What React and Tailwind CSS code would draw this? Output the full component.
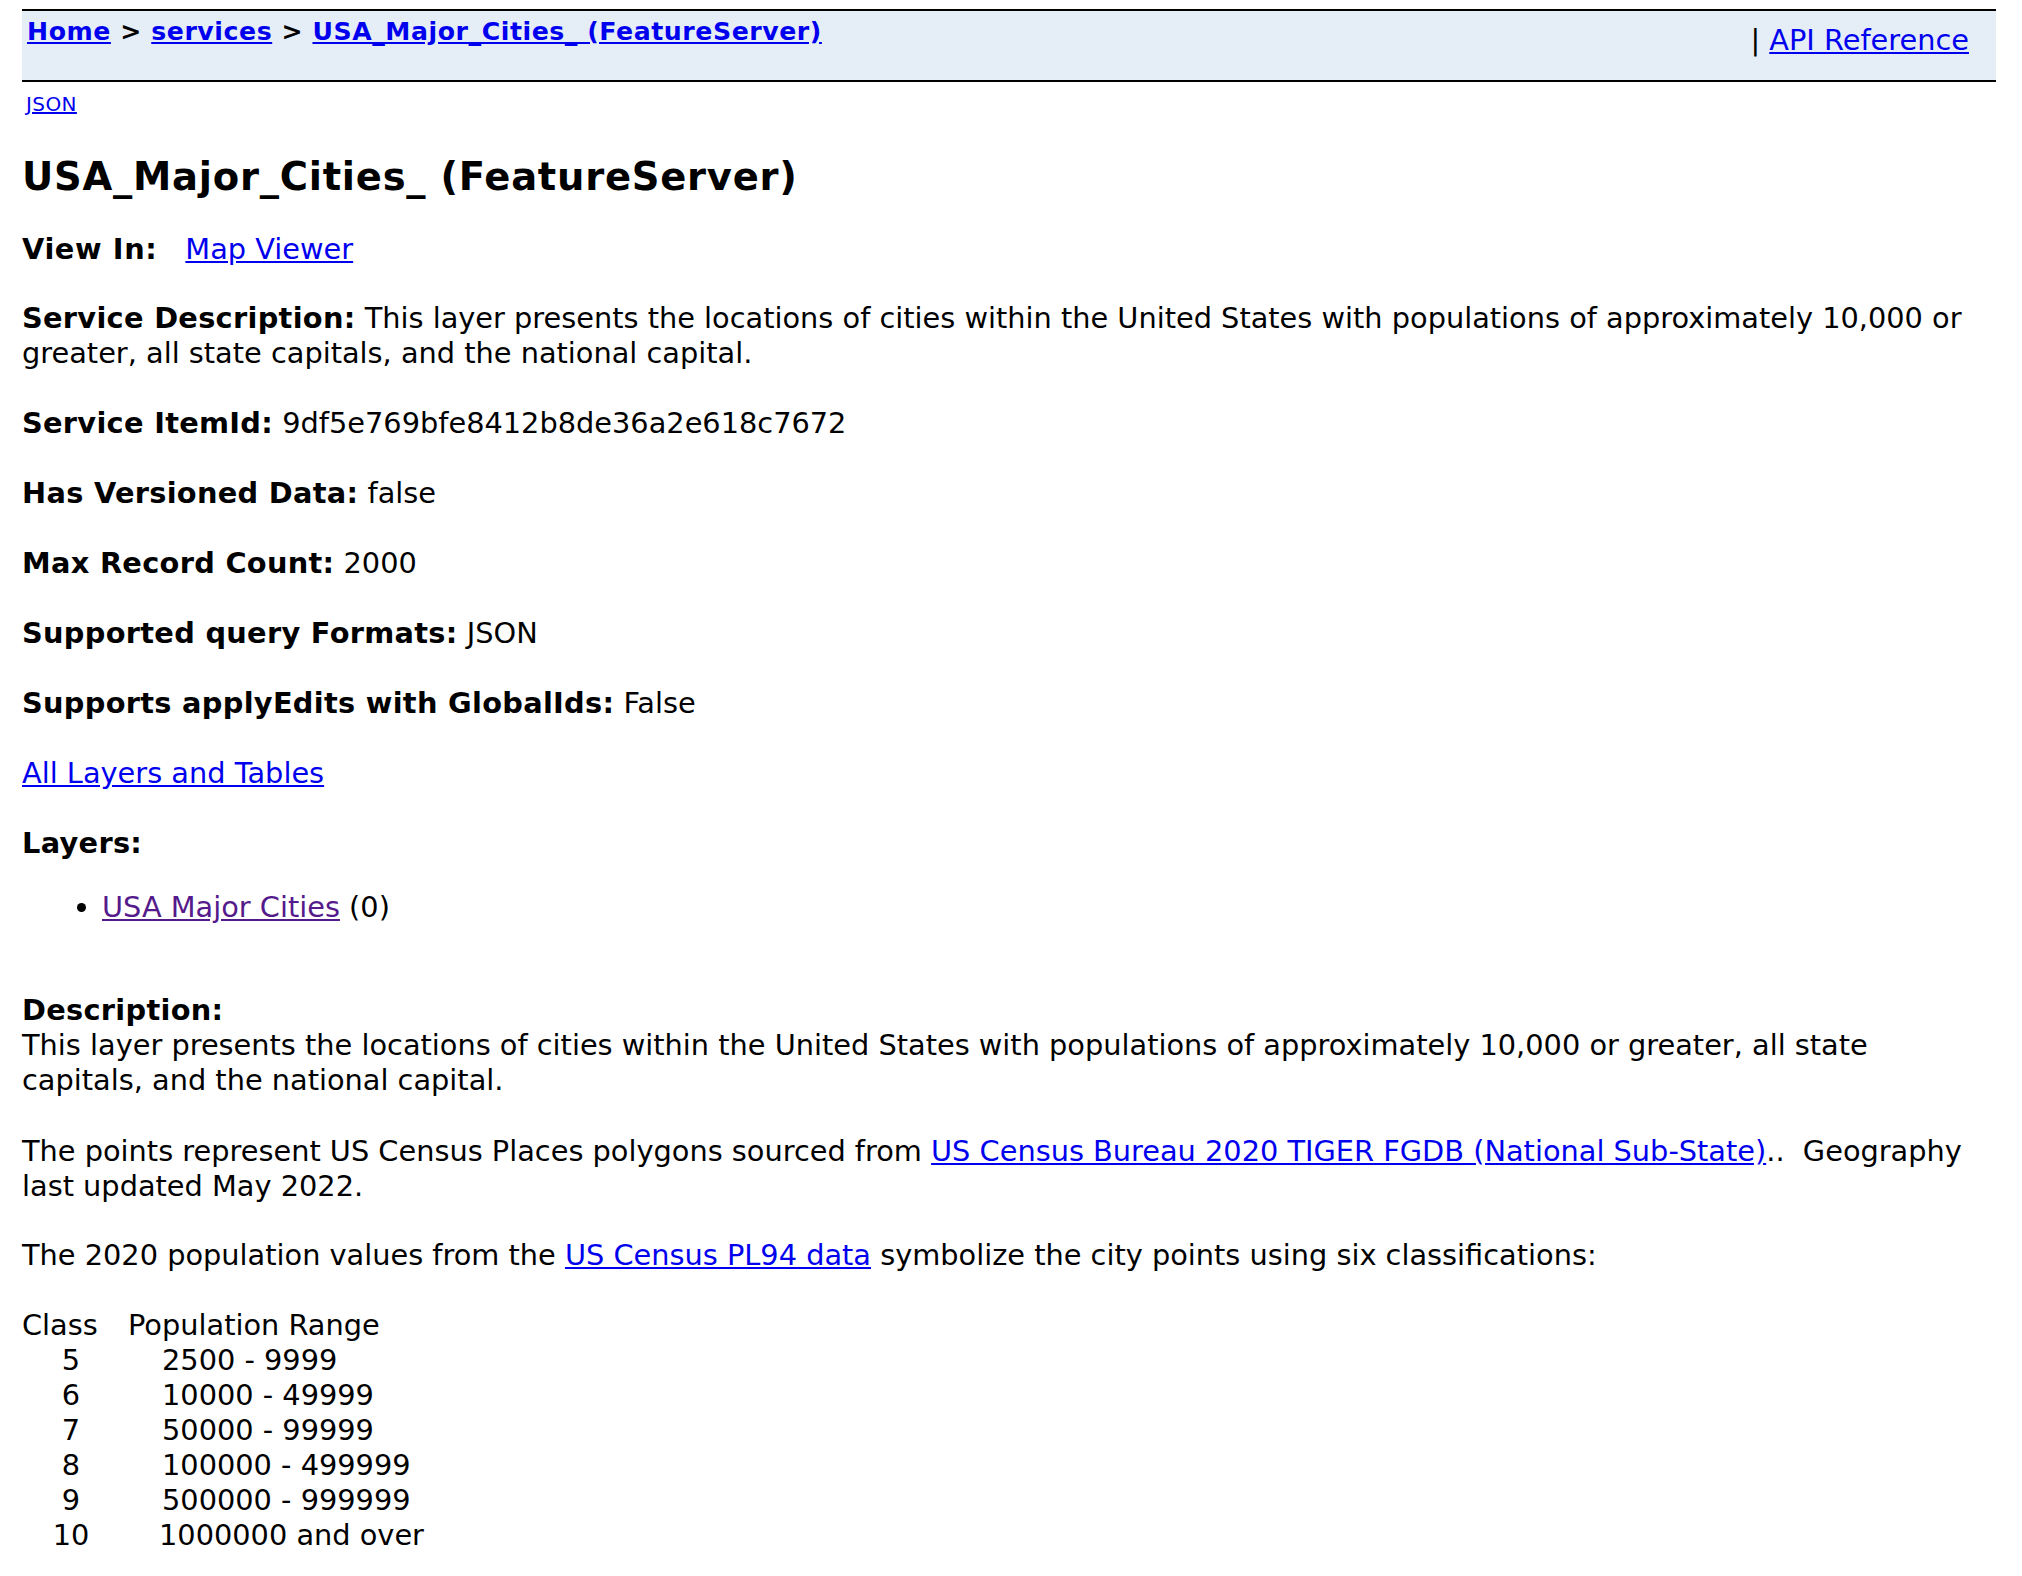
import React from 'react';

const ranges = [
  { cls: '5', range: '2500 - 9999' },
  { cls: '6', range: '10000 - 49999' },
  { cls: '7', range: '50000 - 99999' },
  { cls: '8', range: '100000 - 499999' },
  { cls: '9', range: '500000 - 999999' },
  { cls: '10', range: '1000000 and over' },
];

const Field = ({ label, children }) => (
  <div className="mb-[35px]">
    <b className="tracking-[0.3px]">{label}</b> {children}
  </div>
);

const A = ({ children, visited }) => (
  <a href="#" className={visited ? 'text-[#551a8b] underline' : 'text-[#0000ee] underline'}>
    {children}
  </a>
);

export default function App() {
  return (
    <div
      className="bg-white text-black pl-[22px] pr-[26px] pb-[20px] text-[28.8px] leading-[35px]"
      style={{ fontFamily: '"DejaVu Sans", Verdana, sans-serif' }}
    >
      {/* header bar */}
      <div className="mt-[9px] h-[73px] border-y-2 border-black bg-[#e5eef6] flex justify-between">
        <div className="pl-[5px] pt-[6px] text-[25.2px] leading-[30px] font-bold tracking-[0.55px]">
          <A>Home</A> &gt; <A>services</A> &gt; <A>USA_Major_Cities_ (FeatureServer)</A>
        </div>
        <div className="pt-[12px] pr-[27px]">
          | <A>API Reference</A>
        </div>
      </div>

      <div className="mt-[11px] pl-[4px] text-[20px] leading-[23px] tracking-[0.4px]">
        <A>JSON</A>
      </div>

      <h2 className="mt-[37px] text-[38.5px] leading-[47px] font-bold tracking-[0.75px]">
        USA_Major_Cities_ (FeatureServer)
      </h2>

      <div className="mt-[32px] mb-[34px]">
        <b className="tracking-[0.6px]">View In:</b>
        <span className="inline-block w-[28px]" />
        <A>Map Viewer</A>
      </div>

      <Field label="Service Description:">
        This layer presents the locations of cities within the United States with populations of approximately 10,000 or greater, all state capitals, and the national capital.
      </Field>
      <Field label="Service ItemId:">9df5e769bfe8412b8de36a2e618c7672</Field>
      <Field label="Has Versioned Data:">false</Field>
      <Field label="Max Record Count:">2000</Field>
      <Field label="Supported query Formats:">JSON</Field>
      <Field label="Supports applyEdits with GlobalIds:">False</Field>

      <div className="mb-[35px]">
        <A>All Layers and Tables</A>
      </div>

      <div className="font-bold tracking-[0.3px]">Layers:</div>
      <ul className="mt-[29px] pl-[80px] list-disc">
        <li>
          <A visited>USA Major Cities</A> (0)
        </li>
      </ul>

      <div className="mt-[68px] font-bold tracking-[0.3px]">Description:</div>
      <div>
        This layer presents the locations of cities within the United States with populations of approximately 10,000 or greater, all state capitals, and the national capital.
      </div>
      <div className="mt-[36px]">
        The points represent US Census Places polygons sourced from <A>US Census Bureau 2020 TIGER FGDB (National Sub-State)</A>..&nbsp; Geography last updated May 2022.
      </div>
      <div className="mt-[34px]">
        The 2020 population values from the <A>US Census PL94 data</A> symbolize the city points using six classifications:
      </div>

      <div className="mt-[35px]">
        <div className="flex">
          <span className="w-[106px]">Class</span>
          <span>Population Range</span>
        </div>
        {ranges.map((r) => (
          <div key={r.cls} className="flex">
            <span className="w-[98px] text-center">{r.cls}</span>
            <span className={r.cls === '10' ? 'pl-[39px]' : 'pl-[42px]'}>{r.range}</span>
          </div>
        ))}
      </div>
    </div>
  );
}
